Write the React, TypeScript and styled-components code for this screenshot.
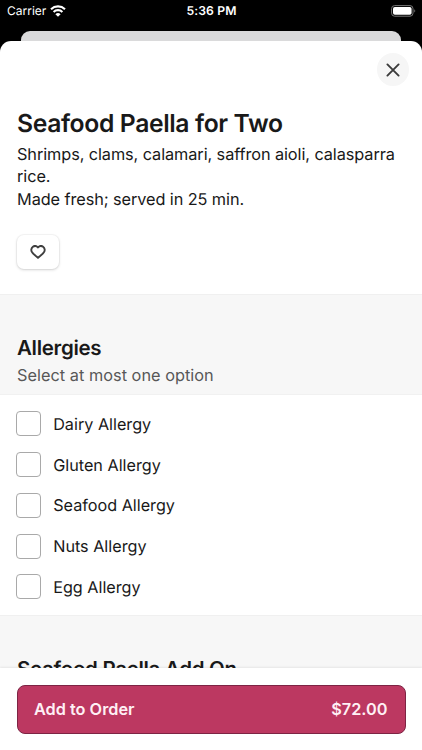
import React from "react";
import styled, { createGlobalStyle } from "styled-components";

const GlobalStyle = createGlobalStyle`
  * { box-sizing: border-box; }
  body { margin: 0; background: #000; }
  button, h1, h2, p, ul { margin: 0; padding: 0; }
  button { font: inherit; }
`;

const Screen = styled.div`
  width: 422px;
  height: 750px;
  overflow: hidden;
  display: flex;
  flex-direction: column;
  background: #000;
  color: #191919;
  font-family: Inter, "Liberation Sans", sans-serif;
  font-size: 16px;
  text-rendering: geometricPrecision;
`;

const StatusBar = styled.header`
  display: grid;
  grid-template-columns: 1fr auto 1fr;
  align-items: center;
  height: 31px;
  padding: 0 6px 10px 7px;
  color: #fff;
  font-size: 12.2px;
`;

const Carrier = styled.div`
  display: flex;
  align-items: center;
  gap: 4px;
  font-size: 12px;
`;

const Clock = styled.div`
  font-weight: 600;
  letter-spacing: 0.1px;
`;

const Battery = styled.svg`
  justify-self: end;
`;

const BackCard = styled.div`
  flex: none;
  height: 10px;
  margin: 0 21px;
  border-radius: 9px 9px 0 0;
  background: #dadadb;
`;

const Sheet = styled.main`
  flex: 1;
  min-height: 0;
  display: flex;
  flex-direction: column;
  border-radius: 11px 11px 0 0;
  background: #fff;
  overflow: hidden;
`;

const Content = styled.div`
  flex: 1;
  min-height: 0;
  overflow: hidden;
`;

const Intro = styled.section`
  display: flex;
  flex-direction: column;
  height: 253px;
  padding: 12px 13px 0 17px;
`;

const CloseButton = styled.button`
  align-self: flex-end;
  display: grid;
  place-items: center;
  width: 32px;
  height: 33px;
  border: 0;
  border-radius: 50%;
  background: #f6f6f6;
`;

const Title = styled.h1`
  margin-top: 21px;
  font-size: 24.7px;
  line-height: 32px;
  font-weight: 600;
  letter-spacing: -0.37px;
`;

const Description = styled.p`
  margin-top: 4px;
  font-size: 16.3px;
  line-height: 22.4px;
  white-space: pre-line;
  letter-spacing: -0.08px;
`;

const FavoriteButton = styled.button`
  display: grid;
  place-items: center;
  width: 42px;
  height: 34px;
  margin-top: 25px;
  border: 0;
  border-radius: 7px;
  background: #fff;
  box-shadow: 0 0 0 1px rgba(0, 0, 0, 0.03), 0 1px 3px rgba(0, 0, 0, 0.16);
`;

const SectionHeader = styled.div`
  height: 101px;
  padding: 39px 17px 0;
  border-top: 1px solid #f0f0f0;
  border-bottom: 1px solid #f1f1f1;
  background: #f7f7f7;
`;

const SectionTitle = styled.h2`
  font-size: 20.5px;
  line-height: 28px;
  font-weight: 600;
  letter-spacing: -0.3px;
`;

const SectionHint = styled.p`
  margin-top: 2px;
  color: #585858;
  font-size: 16.3px;
  line-height: 23px;
  letter-spacing: 0.03px;
`;

const OptionList = styled.ul`
  height: 220px;
  padding: 8.5px 17px 0 16px;
  list-style: none;
`;

const Option = styled.li`
  display: flex;
  align-items: center;
  gap: 12.2px;
  height: 40.75px;
`;

const Checkbox = styled.span`
  width: 25px;
  height: 25px;
  border: 1px solid #a9a9a9;
  border-radius: 4px;
  background: #fff;
`;

const OptionLabel = styled.span`
  font-size: 16.2px;
  line-height: 22px;
`;

const Footer = styled.footer`
  position: relative;
  flex: none;
  height: 82px;
  padding: 16.5px 16.5px 0;
  background: #fff;
  box-shadow: 0 -1px 2px rgba(0, 0, 0, 0.07);
`;

const OrderButton = styled.button`
  display: flex;
  align-items: center;
  justify-content: space-between;
  width: 100%;
  height: 49px;
  padding: 0 17px 0 16.5px;
  border: 1px solid #7d2444;
  border-radius: 8px;
  background: #bc3861;
  color: #fff0f5;
  font-size: 16.3px;
  font-weight: 600;
`;

const allergies = ["Dairy", "Gluten", "Seafood", "Nuts", "Egg"];

export default function App() {
  return (
    <Screen>
      <GlobalStyle />
      <StatusBar>
        <Carrier>
          Carrier
          <svg width="16" height="12" viewBox="0 0 16 12" fill="none" stroke="#fff" strokeWidth="2.1">
            <path d="M1 4.2a10.2 10.2 0 0 1 14 0M3.6 6.9a6.3 6.3 0 0 1 8.8 0" />
            <path d="M5.4 9.2a3.8 3.8 0 0 1 5.2 0L8 11.8Z" fill="#fff" stroke="none" />
          </svg>
        </Carrier>
        <Clock>5:36 PM</Clock>
        <Battery width="25" height="12" viewBox="0 0 25 12" fill="none">
          <rect x="0.6" y="0.6" width="21.4" height="10.6" rx="3" stroke="#777" />
          <rect x="2" y="2" width="18.6" height="7.8" rx="1.8" fill="#fff" />
          <path d="M23.3 4.3c1.3.6 1.3 2.7 0 3.3Z" fill="#777" />
        </Battery>
      </StatusBar>
      <BackCard />
      <Sheet>
        <Content>
          <Intro>
            <CloseButton aria-label="Close">
              <svg width="14" height="14" viewBox="0 0 14 14" stroke="#3b3b3b" strokeWidth="1.9" strokeLinecap="round">
                <path d="m1.4 1.4 11.2 11.2M12.6 1.4 1.4 12.6" />
              </svg>
            </CloseButton>
            <Title>Seafood Paella for Two</Title>
            <Description>
              {"Shrimps, clams, calamari, saffron aioli, calasparra rice.\nMade fresh; served in 25 min."}
            </Description>
            <FavoriteButton aria-label="Add to favorites">
              <svg width="16" height="14" viewBox="0 0 16 14" fill="none" stroke="#3f3f3f" strokeWidth="1.9" strokeLinejoin="round">
                <path d="M8 2.5C6.6.8 4.4.7 2.9 1.8 1 3.2.9 5.6 2.1 7.2 3.4 9.1 6 11.1 8 12.9c2-1.8 4.6-3.8 5.9-5.7 1.2-1.6 1.1-4-.8-5.4C11.6.7 9.4.8 8 2.5Z" />
              </svg>
            </FavoriteButton>
          </Intro>
          <SectionHeader>
            <SectionTitle>Allergies</SectionTitle>
            <SectionHint>Select at most one option</SectionHint>
          </SectionHeader>
          <OptionList>
            {allergies.map((name) => (
              <Option key={name}>
                <Checkbox role="checkbox" aria-checked="false" />
                <OptionLabel>{name} Allergy</OptionLabel>
              </Option>
            ))}
          </OptionList>
          <SectionHeader>
            <SectionTitle>Seafood Paella Add On</SectionTitle>
          </SectionHeader>
        </Content>
        <Footer>
          <OrderButton>
            <span>Add to Order</span>
            <span>$72.00</span>
          </OrderButton>
        </Footer>
      </Sheet>
    </Screen>
  );
}
